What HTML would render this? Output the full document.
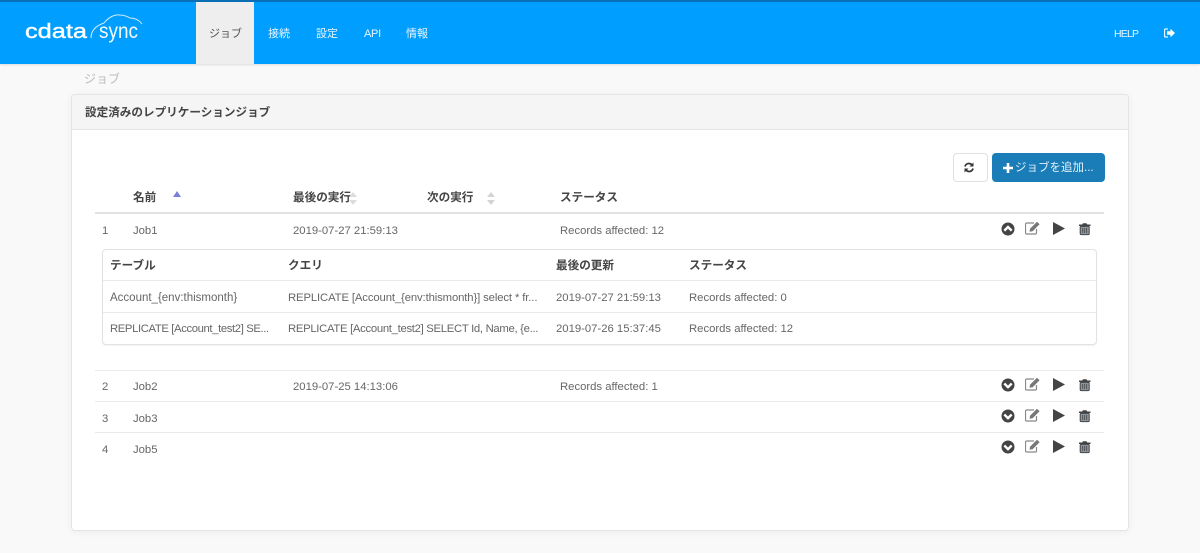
<!DOCTYPE html>
<html lang="ja"><head><meta charset="utf-8"><title>ジョブ</title>
<style>
html,body{margin:0;padding:0}
body{width:1200px;height:553px;overflow:hidden;position:relative;background:#f9f9f9;font-family:"Liberation Sans","Noto Sans CJK JP",sans-serif;font-size:12px;color:#666}
div,a,span.t{position:absolute;white-space:nowrap}
.t{line-height:16px}
.n{color:#e8f6ff;font-size:11px;line-height:16px;top:26px;position:absolute}
.h{font-weight:700;color:#444;font-size:11.6px;line-height:16px;position:absolute;white-space:nowrap}
.c{color:#666;font-size:11.3px;line-height:16px;position:absolute;white-space:nowrap}
.l{background:#e9e9e9;height:1px;position:absolute}
svg{position:absolute;display:block}
</style></head><body>
<svg width="0" height="0" style="position:absolute"><defs>
<g id="up"><circle cx="7" cy="7" r="6.500" fill="#444"/><path d="M3.300 8.700L7 5l3.700 3.700" fill="none" stroke="#fff" stroke-width="2.400"/></g>
<g id="down"><circle cx="7" cy="7" r="6.500" fill="#444"/><path d="M3.300 5.500L7 9.200l3.700-3.700" fill="none" stroke="#fff" stroke-width="2.400"/></g>
<g id="edit"><path d="M11.500 8v3.700a1.300 1.300 0 0 1-1.300 1.300H1.800A1.300 1.300 0 0 1 .5 11.700V3.300A1.300 1.300 0 0 1 1.800 2H9" fill="none" stroke="#888" stroke-width="1.200"/><path d="M5 7.700L12 .7l2.600 2.600-7 7-3 .5z" fill="#777"/></g>
<g id="play"><path d="M0 0L12 6.500L0 13z" fill="#444"/></g>
<g id="trash"><path d="M4 1.200h3.500l.8 1.300H11.500v1.500H0V2.500h3.200z" fill="#444"/><rect x="1.200" y="4.400" width="9" height="8.200" rx="1" fill="#8d97a1" stroke="#444" stroke-width="1"/><path d="M3.700 6v5M5.700 6v5M7.700 6v5" stroke="#444" stroke-width=".8"/></g>
</defs></svg>

<div style="left:0;top:0;width:1200px;height:2px;background:#0a6fb5"></div>
<div style="left:0;top:2px;width:1200px;height:62px;background:#009eff;box-shadow:0 1px 2px rgba(0,0,0,.12)"></div>
<div style="left:196px;top:2px;width:58px;height:62px;background:#eee"></div>

<svg style="left:20px;top:10px" width="130" height="40" viewBox="0 0 130 40">
<path d="M71 28C71 21 75 16 84 13C88 8 94 4 100 5C105 5 108 7 110 8C115 8 119 10 122 14" fill="none" stroke="#d5edff" stroke-width="1"/>
<text x="5" y="28" font-family="Liberation Sans" font-size="20" fill="#fff" stroke="#fff" stroke-width=".4" textLength="62" lengthAdjust="spacingAndGlyphs">cdata</text>
<text x="79" y="28" font-family="Liberation Sans" font-size="21" fill="#f2faff" textLength="39" lengthAdjust="spacingAndGlyphs">sync</text>
</svg>

<span class="n" style="left:209px;color:#555">ジョブ</span>
<span class="n" style="left:268px">接続</span>
<span class="n" style="left:316px">設定</span>
<span class="n" style="left:364px;letter-spacing:-.3px">API</span>
<span class="n" style="left:406px">情報</span>
<span class="n" style="left:1114px;font-size:10.500px;letter-spacing:-.8px">HELP</span>
<svg style="left:1164px;top:28px" width="11" height="10" viewBox="0 0 11 10"><path d="M4 1H1.500A1 1 0 0 0 .5 2v6a1 1 0 0 0 1 1H4" fill="none" stroke="#e8f6ff" stroke-width="1.300"/><path d="M3 3.300h3.500V.8L11 5 6.500 9.200V6.700H3z" fill="#fff"/></svg>

<span class="c" style="left:84px;top:71px;color:#bbb;font-size:12px;position:absolute">ジョブ</span>

<div style="left:71px;top:94px;width:1056px;height:435px;background:#fff;border:1px solid #e4e4e4;border-radius:4px;box-shadow:0 1px 8px rgba(0,0,0,.05)"></div>
<div style="left:72px;top:95px;width:1056px;height:34px;background:#f5f5f5;border-bottom:1px solid #e4e4e4;border-radius:3px 3px 0 0"></div>
<span class="h" style="left:85px;top:105px">設定済みのレプリケーションジョブ</span>

<div style="left:953px;top:153px;width:33px;height:27px;background:#fff;border:1px solid #e0e0e0;border-radius:4px"></div>
<svg style="left:964px;top:162px" width="10" height="11" viewBox="0 0 10 11"><path d="M1 4.500A4 4 0 0 1 8 3M9 6.500A4 4 0 0 1 2 8" fill="none" stroke="#333" stroke-width="1.700"/><path d="M9.500 .5v4h-4zM.5 10.500v-4h4z" fill="#333"/></svg>
<div style="left:992px;top:153px;width:113px;height:29px;background:#1a7db8;border-radius:4px"></div>
<svg style="left:1003px;top:163px" width="10" height="10"><path d="M3.700 0h2.600v3.700H10v2.600H6.300V10H3.700V6.300H0V3.700h3.700z" fill="#fff"/></svg>
<span class="t" style="position:absolute;left:1015px;top:160px;color:#e4f1f9;font-size:11.500px">ジョブを追加...</span>

<span class="h" style="left:133px;top:190px">名前</span>
<svg style="left:173px;top:191px" width="8" height="6"><path d="M0 6L4 0l4 6z" fill="#7a80d8"/></svg>
<span class="h" style="left:293px;top:190px">最後の実行</span>
<svg style="left:349px;top:192px" width="8" height="13"><path d="M0 5L4 0l4 5zM0 8l4 5 4-5z" fill="#dcdcdc"/></svg>
<span class="h" style="left:427px;top:190px">次の実行</span>
<svg style="left:487px;top:192px" width="8" height="13"><path d="M0 5L4 0l4 5zM0 8l4 5 4-5z" fill="#d4d4d4"/></svg>
<span class="h" style="left:560px;top:190px">ステータス</span>
<div class="l" style="left:95px;top:212px;width:1009px;height:2px;background:#e2e2e2"></div>

<span class="c" style="left:102px;top:223px">1</span>
<span class="c" style="left:133px;top:223px">Job1</span>
<span class="c" style="left:293px;top:223px">2019-07-27 21:59:13</span>
<span class="c" style="left:560px;top:223px">Records affected: 12</span>
<svg style="left:1001px;top:222px" width="14" height="14"><use href="#up"/></svg>
<svg style="left:1025px;top:221px" width="15" height="14"><use href="#edit"/></svg>
<svg style="left:1053px;top:222px" width="13" height="14"><use href="#play"/></svg>
<svg style="left:1079px;top:222px" width="12" height="14"><use href="#trash"/></svg>

<div style="left:102px;top:249px;width:993px;height:94px;background:#fff;border:1px solid #e2e2e2;border-radius:4px;box-shadow:0 1px 1px rgba(0,0,0,.05)"></div>
<span class="h" style="left:110px;top:258px">テーブル</span>
<span class="h" style="left:288px;top:258px">クエリ</span>
<span class="h" style="left:556px;top:258px">最後の更新</span>
<span class="h" style="left:689px;top:258px">ステータス</span>
<div class="l" style="left:103px;top:280px;width:993px"></div>
<span class="c" style="left:110px;top:290px;font-size:11.500px">Account_{env:thismonth}</span>
<span class="c" style="left:288px;top:290px;letter-spacing:-.12px">REPLICATE [Account_{env:thismonth}] select * fr...</span>
<span class="c" style="left:556px;top:290px">2019-07-27 21:59:13</span>
<span class="c" style="left:689px;top:290px">Records affected: 0</span>
<div class="l" style="left:103px;top:312px;width:993px"></div>
<span class="c" style="left:110px;top:321px;letter-spacing:-.38px">REPLICATE [Account_test2] SE...</span>
<span class="c" style="left:288px;top:321px;letter-spacing:-.3px">REPLICATE [Account_test2] SELECT Id, Name, {e...</span>
<span class="c" style="left:556px;top:321px">2019-07-26 15:37:45</span>
<span class="c" style="left:689px;top:321px">Records affected: 12</span>

<div class="l" style="left:95px;top:370px;width:1009px"></div>
<span class="c" style="left:102px;top:379px">2</span>
<span class="c" style="left:133px;top:379px">Job2</span>
<span class="c" style="left:293px;top:379px">2019-07-25 14:13:06</span>
<span class="c" style="left:560px;top:379px">Records affected: 1</span>
<svg style="left:1001px;top:378px" width="14" height="14"><use href="#down"/></svg>
<svg style="left:1025px;top:377px" width="15" height="14"><use href="#edit"/></svg>
<svg style="left:1053px;top:378px" width="13" height="14"><use href="#play"/></svg>
<svg style="left:1079px;top:378px" width="12" height="14"><use href="#trash"/></svg>

<div class="l" style="left:95px;top:401px;width:1009px"></div>
<span class="c" style="left:102px;top:411px">3</span>
<span class="c" style="left:133px;top:411px">Job3</span>
<svg style="left:1001px;top:409px" width="14" height="14"><use href="#down"/></svg>
<svg style="left:1025px;top:408px" width="15" height="14"><use href="#edit"/></svg>
<svg style="left:1053px;top:409px" width="13" height="14"><use href="#play"/></svg>
<svg style="left:1079px;top:409px" width="12" height="14"><use href="#trash"/></svg>

<div class="l" style="left:95px;top:432px;width:1009px"></div>
<span class="c" style="left:102px;top:442px">4</span>
<span class="c" style="left:133px;top:442px">Job5</span>
<svg style="left:1001px;top:440px" width="14" height="14"><use href="#down"/></svg>
<svg style="left:1025px;top:439px" width="15" height="14"><use href="#edit"/></svg>
<svg style="left:1053px;top:440px" width="13" height="14"><use href="#play"/></svg>
<svg style="left:1079px;top:440px" width="12" height="14"><use href="#trash"/></svg>
</body></html>
